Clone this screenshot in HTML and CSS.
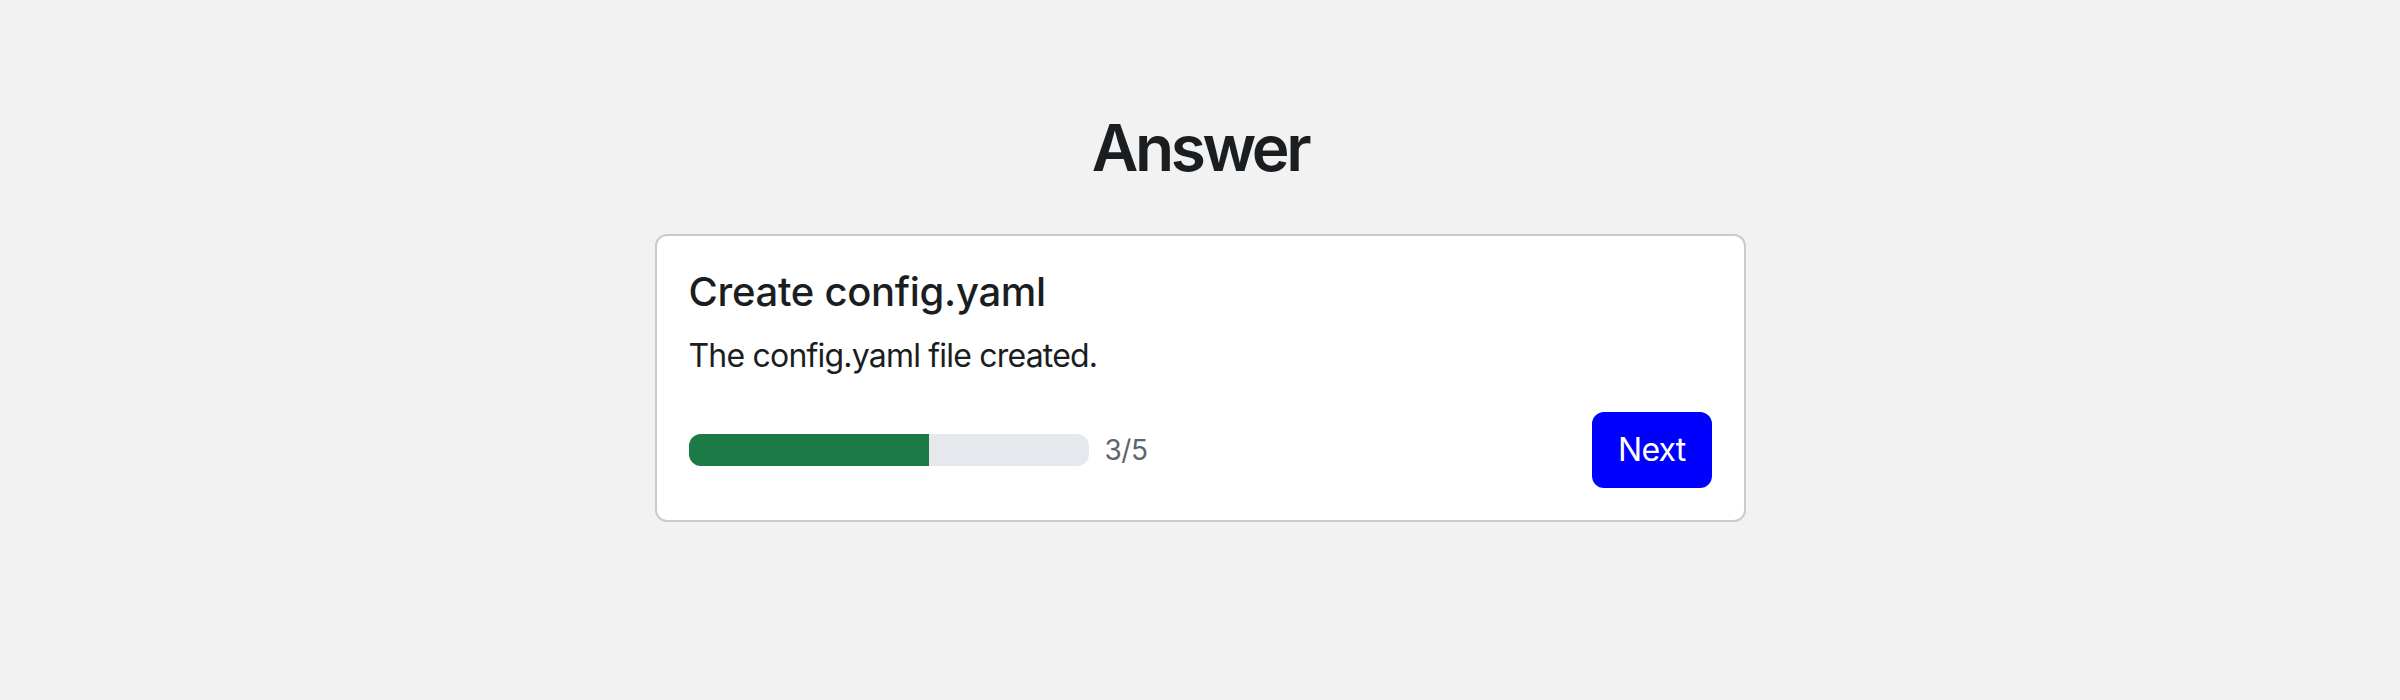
FILE: index.html
```html
<!DOCTYPE html>
<html lang="en">
<head>
<meta charset="utf-8">
<title>Answer</title>
<link rel="stylesheet" href="styles.css">
</head>
<body>
<main class="page">
  <h1 class="page-title">Answer</h1>
  <section class="card">
    <h2 class="card-title">Create config.yaml</h2>
    <p class="card-text">The config.yaml file created.</p>
    <div class="card-footer">
      <div class="progress-wrap">
        <div class="progress"><div class="progress-fill" style="width:60%"></div></div>
        <span class="progress-label">3/5</span>
      </div>
      <button class="btn-next" type="button">Next</button>
    </div>
  </section>
</main>
</body>
</html>
```

FILE: styles.css
```css
* { box-sizing: border-box; }
html, body {
  margin: 0;
  padding: 0;
  background: #f2f2f2;
  font-family: Inter, "Noto Sans", "Liberation Sans", sans-serif;
  color: #212529;
}
.page {
  display: flex;
  flex-direction: column;
  align-items: center;
  padding-top: 110px;
}
.page-title {
  margin: 0 0 47px;
  font-size: 64px;
  line-height: 1.2;
  font-weight: 600;
  letter-spacing: -3.4px;
  color: #1b1e21;
}
.card {
  width: 1091px;
  background: #ffffff;
  border: 2px solid #cacaca;
  border-radius: 12px;
  padding: 32px;
  display: flex;
  flex-direction: column;
}
.card-title {
  margin: 0 0 16px;
  font-size: 40px;
  line-height: 48px;
  font-weight: 500;
  letter-spacing: -0.3px;
  color: #1b1e21;
}
.card-text {
  margin: 0 0 32px;
  font-size: 32px;
  line-height: 48px;
  letter-spacing: -0.8px;
  color: #1b1e21;
}
.card-footer {
  display: flex;
  justify-content: space-between;
  align-items: center;
}
.progress-wrap {
  display: flex;
  align-items: center;
  gap: 16px;
}
.progress {
  width: 400px;
  height: 32px;
  background: #e5e8ec;
  border-radius: 12px;
  overflow: hidden;
  display: flex;
}
.progress-fill {
  background: #1b7a46;
  height: 100%;
}
.progress-label {
  font-size: 28px;
  letter-spacing: -0.5px;
  color: #5d6570;
}
.btn-next {
  font-family: inherit;
  font-size: 32px;
  line-height: 48px;
  letter-spacing: -0.8px;
  padding: 12px 24px;
  border: 2px solid #0000ff;
  background: #0000ff;
  color: #ffffff;
  border-radius: 12px;
}
```
